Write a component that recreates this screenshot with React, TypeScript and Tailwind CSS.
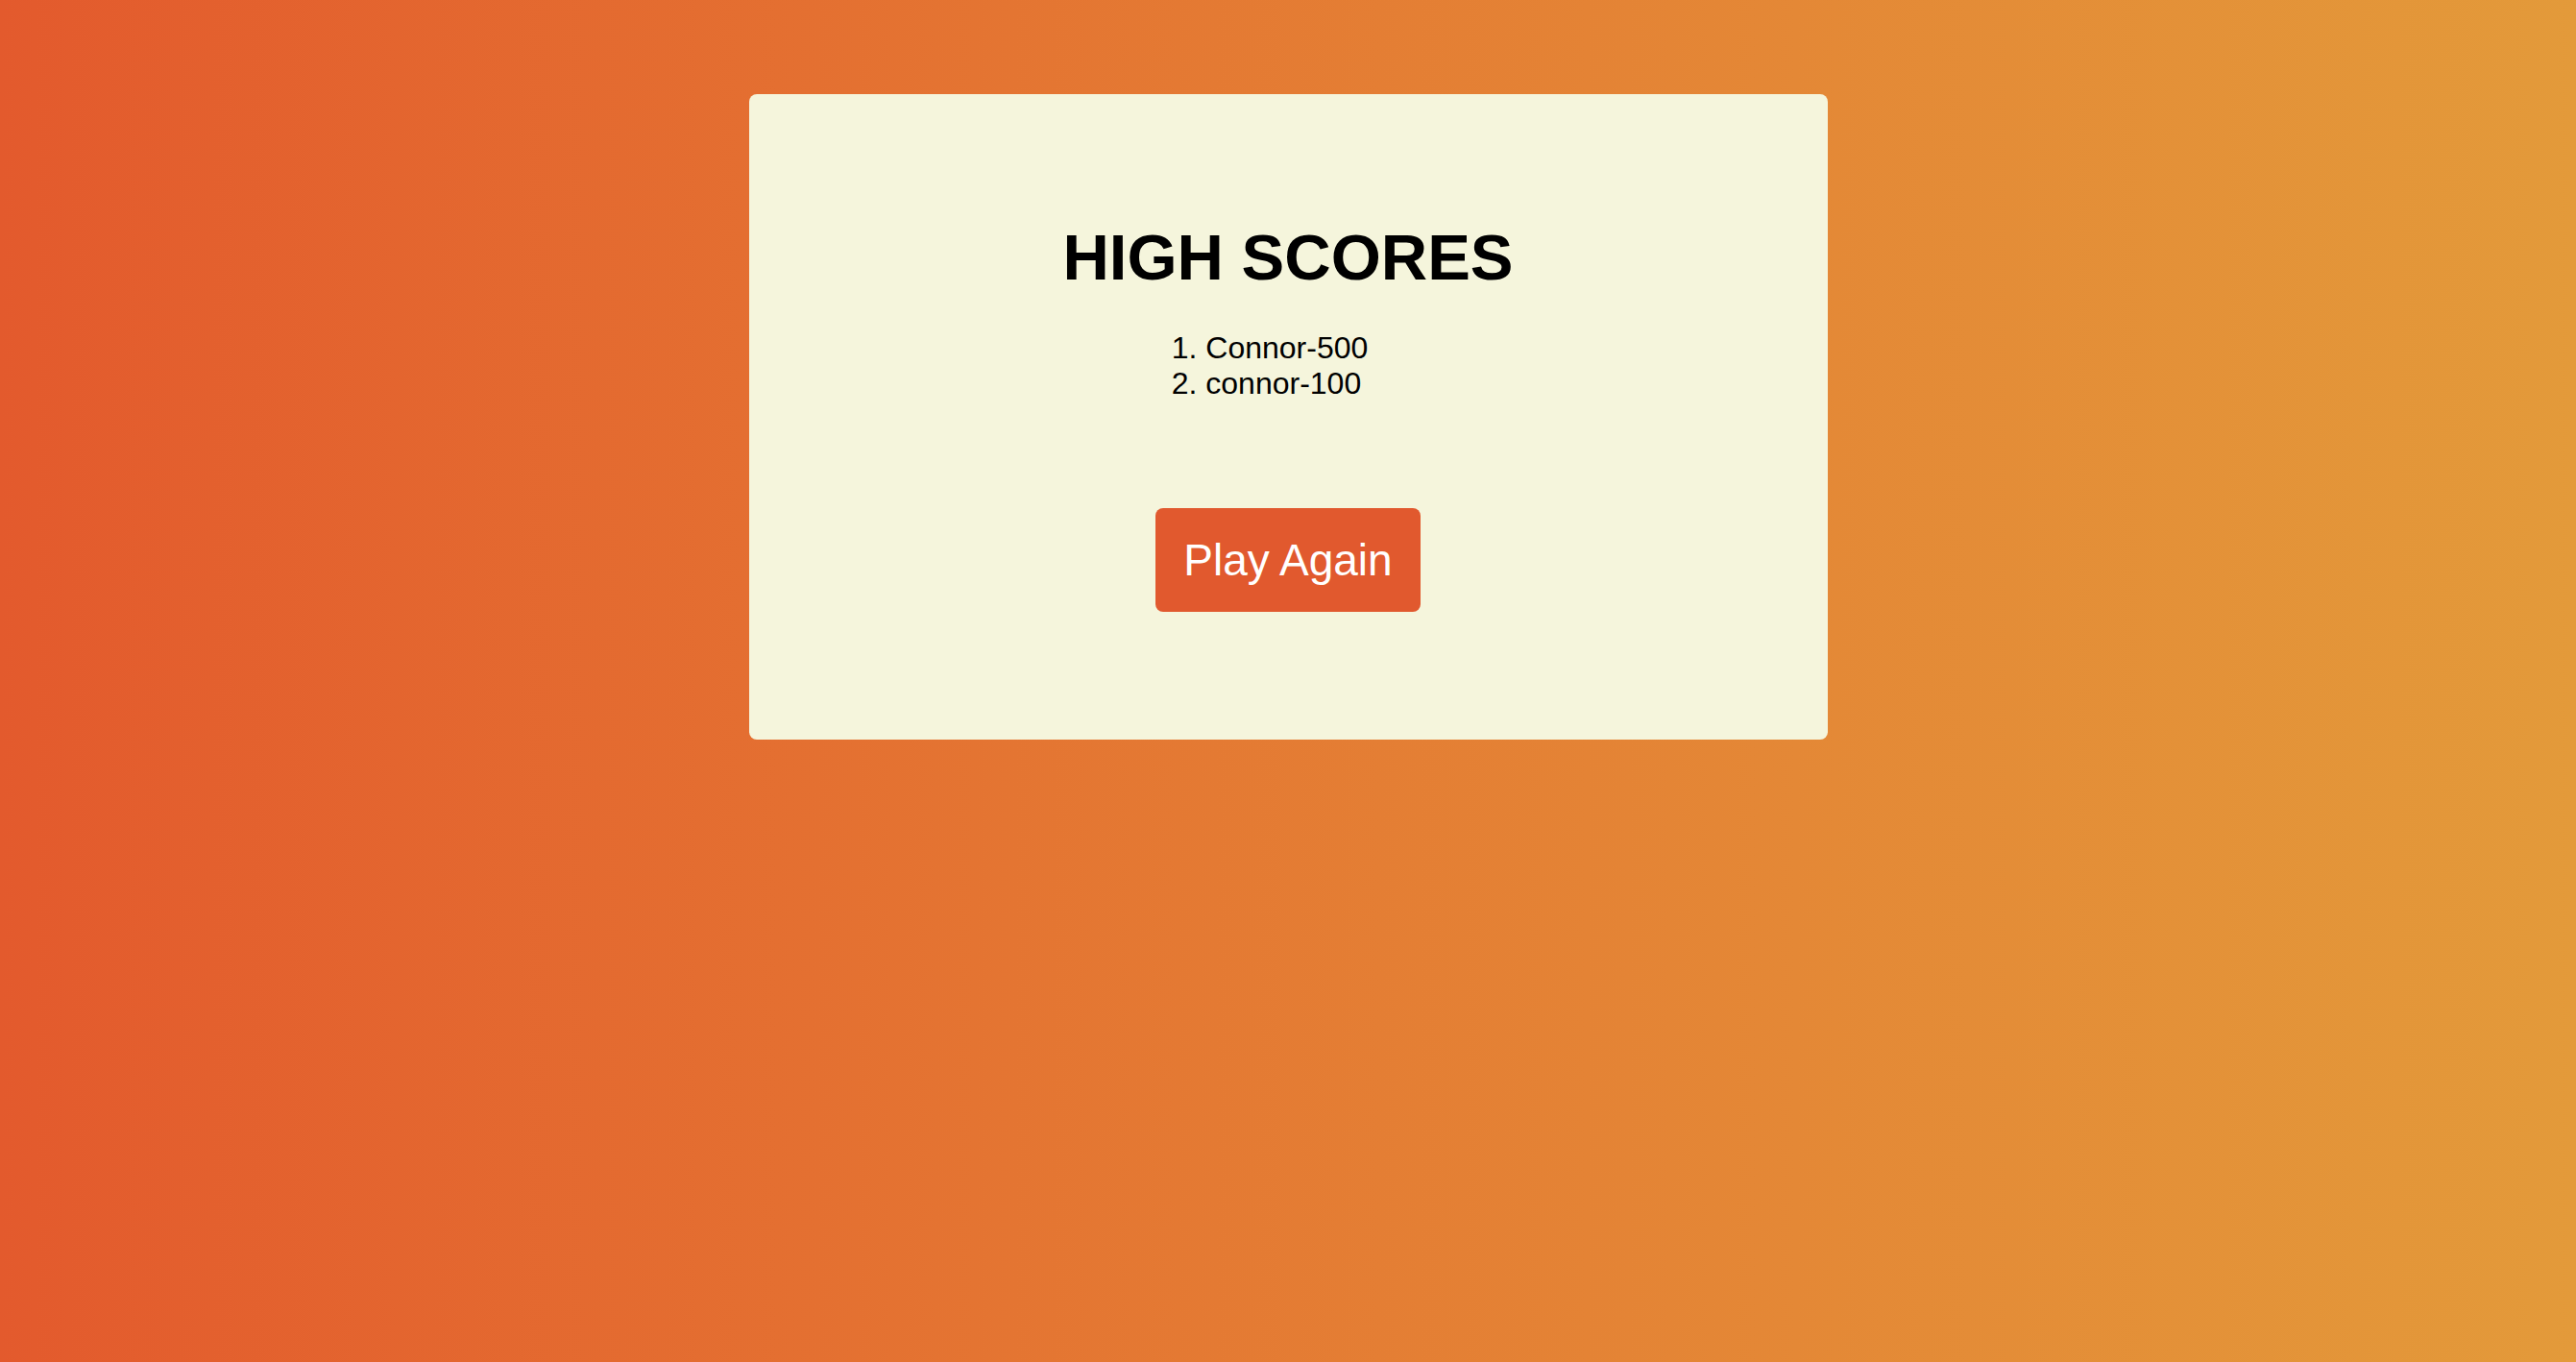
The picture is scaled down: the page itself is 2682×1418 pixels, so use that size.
export default function App() {
  const scores = ['Connor-500', 'connor-100'];

  return (
    <div className="min-h-screen w-full bg-gradient-to-r from-[#e35a2d] to-[#e39a3a] pt-[98px] font-['Liberation_Sans',Arial,sans-serif] text-black">
      <div className="mx-auto flex h-[672px] w-[1123px] flex-col items-center rounded-[8px] bg-[#f5f5dc] pt-[132px]">
        <h1 className="text-[67px] font-bold leading-[76px]">HIGH SCORES</h1>
        <ol className="mt-[38px] mr-[38px] list-inside list-decimal text-[32px] leading-[37px]">
          {scores.map((s) => (
            <li key={s}>{s}</li>
          ))}
        </ol>
        <button className="mt-[111px] h-[108px] rounded-[8px] bg-[#e1592e] px-[29px] text-[46px] text-white">
          Play Again
        </button>
      </div>
    </div>
  );
}
